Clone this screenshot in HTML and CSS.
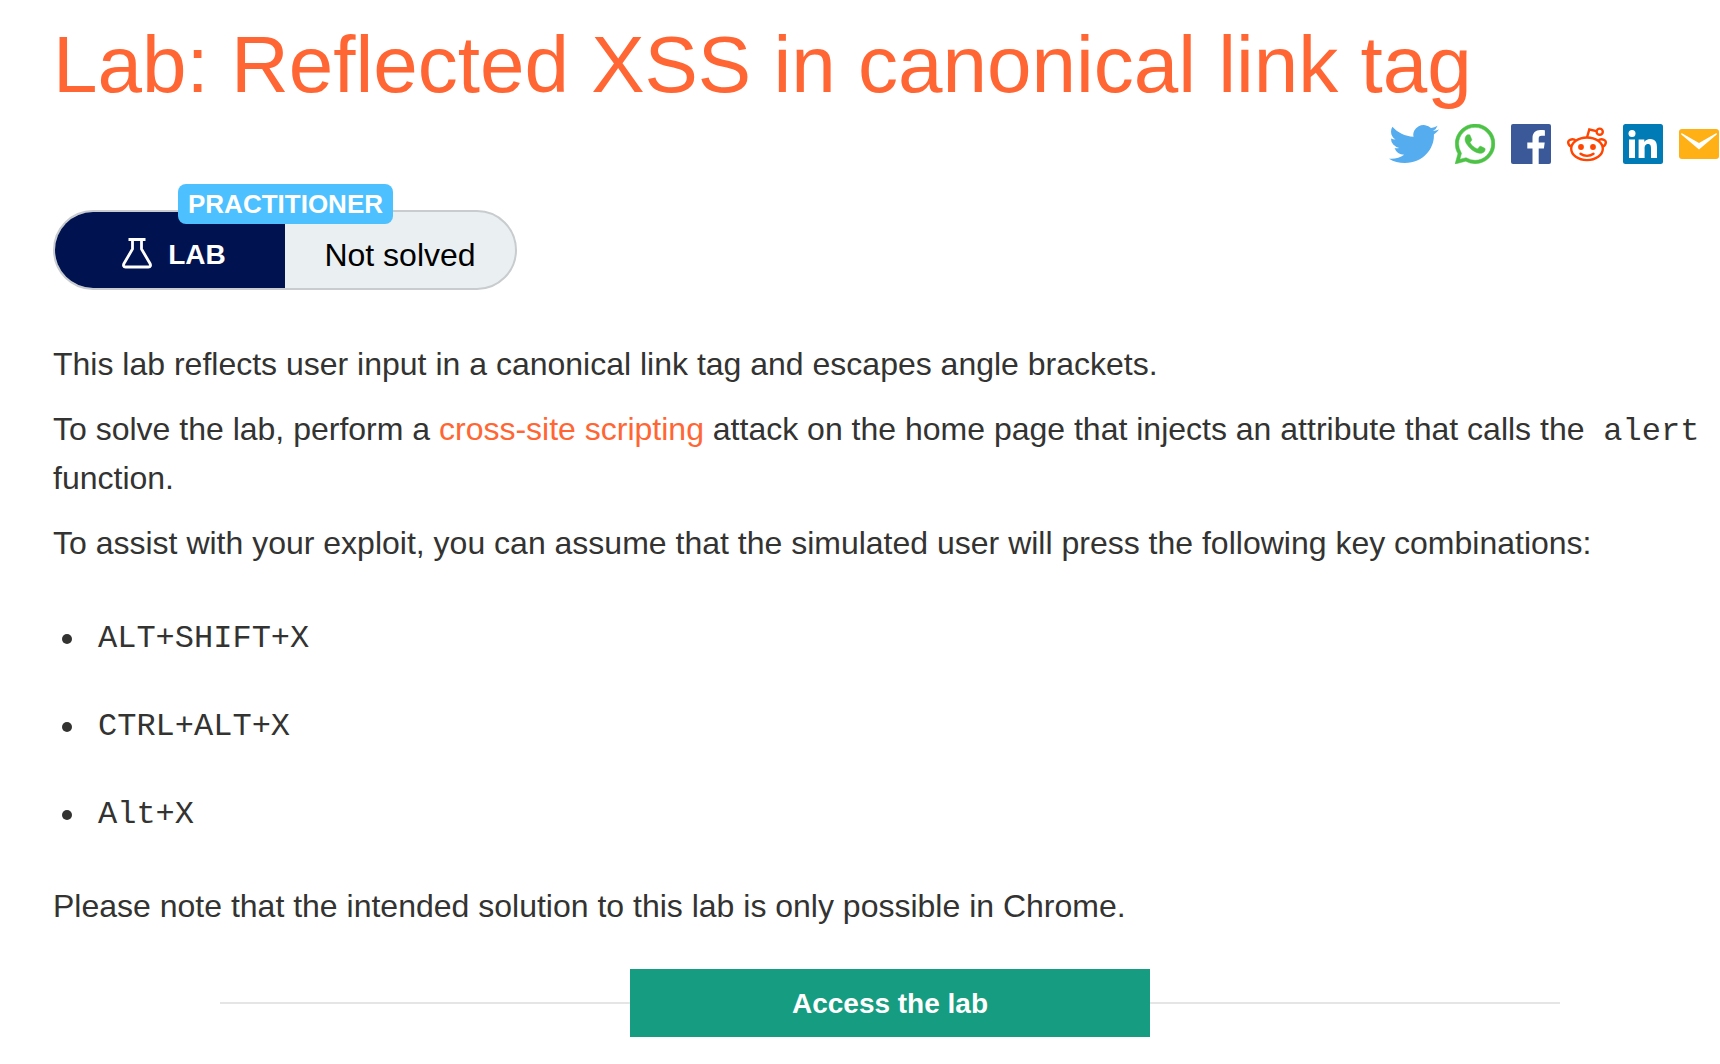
FILE: index.html
```html
<!DOCTYPE html>
<html lang="en">
<head>
<meta charset="utf-8">
<title>Lab: Reflected XSS in canonical link tag</title>
<link rel="stylesheet" href="styles.css">
</head>
<body>
<main class="page">
  <h1 class="title">Lab: Reflected XSS in canonical link tag</h1>
  <nav class="share" aria-label="Share">
    <a href="#twitter" aria-label="Twitter"><svg width="50" height="40" viewBox="0 1.7 24 20.6" preserveAspectRatio="none"><path fill="#55acee" d="M23.954 4.569a10 10 0 0 1-2.825.775 4.958 4.958 0 0 0 2.163-2.723c-.951.555-2.005.959-3.127 1.184a4.92 4.92 0 0 0-8.384 4.482C7.691 8.094 4.066 6.13 1.64 3.161a4.822 4.822 0 0 0-.666 2.475c0 1.71.87 3.213 2.188 4.096a4.904 4.904 0 0 1-2.228-.616v.061a4.923 4.923 0 0 0 3.946 4.827 4.996 4.996 0 0 1-2.212.085 4.937 4.937 0 0 0 4.604 3.417 9.868 9.868 0 0 1-6.102 2.105c-.39 0-.779-.023-1.17-.067a13.995 13.995 0 0 0 7.557 2.209c9.054 0 13.999-7.496 13.999-13.986 0-.209 0-.42-.015-.63a9.936 9.936 0 0 0 2.46-2.548z"/></svg></a>
    <a href="#whatsapp" aria-label="WhatsApp"><svg width="40" height="40" viewBox="0 0 24 24"><path fill="#4dc247" stroke="#4dc247" stroke-width=".3" d="M17.472 14.382c-.297-.149-1.758-.867-2.03-.967-.273-.099-.471-.148-.67.15-.197.297-.767.966-.94 1.164-.173.199-.347.223-.644.075-.297-.15-1.255-.463-2.39-1.475-.883-.788-1.48-1.761-1.653-2.059-.173-.297-.018-.458.13-.606.134-.133.298-.347.446-.52.149-.174.198-.298.298-.497.099-.198.05-.371-.025-.52-.075-.149-.669-1.612-.916-2.207-.242-.579-.487-.5-.669-.51-.173-.008-.371-.01-.57-.01-.198 0-.52.074-.792.372-.272.297-1.04 1.016-1.04 2.479 0 1.462 1.065 2.875 1.213 3.074.149.198 2.096 3.2 5.077 4.487.709.306 1.262.489 1.694.625.712.227 1.36.195 1.871.118.571-.085 1.758-.719 2.006-1.413.248-.694.248-1.289.173-1.413-.074-.124-.272-.198-.57-.347m-5.421 7.403h-.004a9.87 9.87 0 0 1-5.031-1.378l-.361-.214-3.741.982.998-3.648-.235-.374a9.86 9.86 0 0 1-1.51-5.26c.001-5.45 4.436-9.884 9.888-9.884 2.64 0 5.122 1.03 6.988 2.898a9.825 9.825 0 0 1 2.893 6.994c-.003 5.45-4.437 9.884-9.885 9.884m8.413-18.297A11.815 11.815 0 0 0 12.05 0C5.495 0 .16 5.335.157 11.892c0 2.096.547 4.142 1.588 5.945L.057 24l6.305-1.654a11.882 11.882 0 0 0 5.683 1.448h.005c6.554 0 11.89-5.335 11.893-11.893a11.821 11.821 0 0 0-3.48-8.413z"/></svg></a>
    <a href="#facebook" aria-label="Facebook"><svg width="40" height="40" viewBox="0 0 40 40"><rect width="40" height="40" rx="2" fill="#3b5998"/><path fill="#fff" d="M21.500 40V24.500H16.300V18.400H21.500V14C21.500 8.900 24.700 6.100 29.200 6.100C31.400 6.100 33.300 6.300 33.900 6.300V11.700H30.700C28.200 11.700 27.700 12.900 27.700 14.600V18.400H33.700L32.900 24.500H27.700V40Z"/></svg></a>
    <a href="#reddit" aria-label="Reddit"><svg width="40" height="40" viewBox="0 0 40 40" fill="none" stroke="#ff4500" stroke-width="2.400"><ellipse cx="20" cy="24.800" rx="15.800" ry="11.300"/><path d="M4.500 22.500C1 21.500 0 16.800 3 15.800C5.500 14.800 7.700 15.500 9 17M35.500 22.500C39 21.500 40 16.800 37 15.800C34.500 14.800 32.300 15.500 31 17M20 13.500L22.300 5.500L29.500 7.200"/><circle cx="32.700" cy="7.700" r="3.100"/><path d="M13.500 29.800C17 32.500 23 32.500 26.500 29.800" stroke-linecap="round"/><g fill="#ff4500" stroke="none"><circle cx="14" cy="23" r="2.900"/><circle cx="26" cy="23" r="2.900"/></g></svg></a>
    <a href="#linkedin" aria-label="LinkedIn"><svg width="40" height="40" viewBox="0 0 40 40"><rect width="40" height="40" rx="2.500" fill="#007bb6"/><g fill="#fff"><circle cx="9" cy="9.500" r="3.500"/><path d="M6 15.400H12V34H6ZM15.600 15.400H21.300V18C22.300 16.200 24.500 14.900 27 14.900C32.800 14.900 34 18.700 34 23.800V34H28V24.900C28 22.700 27.900 20 25 20C22.100 20 21.600 22.400 21.600 24.800V34H15.600Z"/></g></svg></a>
    <a href="#email" aria-label="Email"><svg width="40" height="40" viewBox="0 0 40 40"><rect y="5" width="40" height="30" rx="3" fill="#ffb014"/><path fill="#fff" d="M2.500 9L20 19L37.500 9L38 10.200L20 25.500L2 10.200Z"/></svg></a>
  </nav>
  <div class="status">
    <span class="status-level">PRACTITIONER</span>
    <div class="status-type">
      <svg width="30" height="32" viewBox="0 0 30 32" fill="none" stroke="#fff" stroke-width="2.800" stroke-linejoin="round"><path d="M6.500 1.500H23.500M10.500 1.500V11L2 25.500C1 27.500 1.500 29 3.500 29H26.500C28.500 29 29 27.500 28 25.500L19.500 11V1.500"/></svg>
      <span>LAB</span>
    </div>
    <div class="status-state">Not solved</div>
  </div>
  <div class="text">
    <p>This lab reflects user input in a canonical link tag and escapes angle brackets.</p>
    <p>To solve the lab, perform a <a href="#xss">cross-site scripting</a> attack on the home page that injects an attribute that calls the <code class="inline-code">alert</code> function.</p>
    <p>To assist with your exploit, you can assume that the simulated user will press the following key combinations:</p>
    <ul>
      <li><code>ALT+SHIFT+X</code></li>
      <li><code>CTRL+ALT+X</code></li>
      <li><code>Alt+X</code></li>
    </ul>
    <p>Please note that the intended solution to this lab is only possible in Chrome.</p>
  </div>
  <div class="launch">
    <button class="launch-button" type="button">Access the lab</button>
  </div>
</main>
</body>
</html>
```
FILE: styles.css
```css
* {
  box-sizing: border-box;
}

body {
  margin: 0;
  background: #fff;
  color: #333332;
  font: 32px/49px "Liberation Sans", Arial, sans-serif;
}

a {
  color: #ff6633;
  text-decoration: none;
}

.page {
  padding: 21px 0 24px 53px;
}

.title {
  margin: 0;
  color: #ff6633;
  font-size: 80px;
  font-weight: 400;
  line-height: 88px;
}

.share {
  display: flex;
  justify-content: flex-end;
  gap: 16px;
  margin-top: 15px;
  padding-right: 1px;
}

.share a,
.share svg {
  display: block;
}

.status {
  position: relative;
  display: flex;
  width: 464px;
  height: 80px;
  margin-top: 46px;
  border: 2px solid #c8ccce;
  border-radius: 40px;
  background: #eaeff2;
}

.status-level {
  position: absolute;
  top: -28px;
  left: 123px;
  padding: 1px 10px 0;
  border-radius: 8px;
  background: #4dc0ff;
  color: #fff;
  font-size: 26px;
  font-weight: 700;
  line-height: 39px;
}

.status-type,
.status-state {
  display: flex;
  width: 50%;
  align-items: center;
  justify-content: center;
  padding-top: 10px;
}

.status-type {
  gap: 16px;
  padding: 8px 0 0 8px;
  border-radius: 38px 0 0 38px;
  background: #00124f;
  color: #fff;
  font-size: 28px;
  font-weight: 700;
}

.status-state {
  color: #000;
}

.text {
  margin-top: 50px;
}

.text p {
  margin: 0 0 16px;
}

.inline-code {
  padding: 0 10px;
}

code {
  font: 32px/40px "Liberation Mono", "Courier New", monospace;
}

.text ul {
  margin: 46px 0 43px;
  padding: 0;
  list-style: none;
}

.text li {
  display: flex;
  gap: 26px;
  align-items: center;
  margin-bottom: 39px;
  padding-left: 9px;
}

.text li::before {
  width: 10px;
  height: 10px;
  border-radius: 50%;
  background: #333332;
  content: "";
}

.text li code {
  line-height: 49px;
}

.launch {
  display: flex;
  align-items: center;
  margin: 38px 160px 0 167px;
}

.launch::before,
.launch::after {
  flex: 1;
  height: 2px;
  background: #e5e5e5;
  content: "";
}

.launch-button {
  width: 520px;
  height: 68px;
  border: 0;
  background: #169c80;
  color: #fff;
  font: 700 28px/68px "Liberation Sans", Arial, sans-serif;
}
```
